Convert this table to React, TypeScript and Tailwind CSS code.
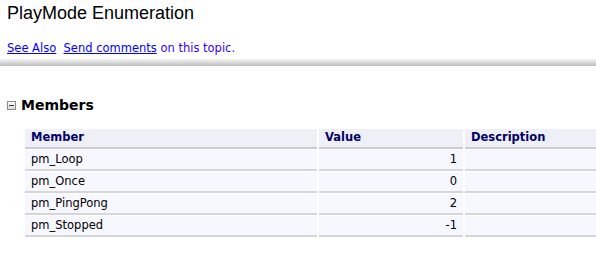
import React from "react";

type Row = { name: string; value: string; desc: string };

const rows: Row[] = [
  { name: "pm_Loop", value: "1", desc: "" },
  { name: "pm_Once", value: "0", desc: "" },
  { name: "pm_PingPong", value: "2", desc: "" },
  { name: "pm_Stopped", value: "-1", desc: "" },
];

function CollapseIcon() {
  return (
    <svg width="9" height="9" viewBox="0 0 9 9" className="shrink-0">
      <defs>
        <linearGradient id="cg" x1="0" y1="0" x2="0" y2="1">
          <stop offset="0" stopColor="#ffffff" />
          <stop offset="1" stopColor="#d8d8d8" />
        </linearGradient>
      </defs>
      <rect x="0.5" y="0.5" width="8" height="8" fill="url(#cg)" stroke="#8a8a8a" />
      <rect x="2" y="4" width="5" height="1" fill="#333333" />
    </svg>
  );
}

export default function App() {
  return (
    <div
      className="w-[596px] h-[269px] bg-white overflow-hidden"
      style={{ fontFamily: "'DejaVu Sans', Verdana, sans-serif" }}
    >
      {/* page header */}
      <div className="px-[7px] pt-[2px]">
        <div className="text-[18px] leading-[22px] text-black font-['Liberation_Sans',Arial,sans-serif]">
          PlayMode Enumeration
        </div>
        <div className="mt-[16px] text-[11.5px] leading-[16px] text-[#0000ff]">
          <a href="#" className="underline text-[#0000ff]">See Also</a>
          <span>&nbsp; </span>
          <a href="#" className="underline text-[#0000ff]">Send comments</a>
          <span className="text-[#3300ff]"> on this topic.</span>
        </div>
      </div>
      <div className="mt-[3px] h-[7px] bg-gradient-to-b from-[#f4f4f4] to-[#bdbdbd]" />

      {/* members section */}
      <div className="mt-[31px] flex items-center gap-[5px] pl-[7px]">
        <CollapseIcon />
        <div className="text-[14px] leading-[16px] font-bold text-black">Members</div>
      </div>

      <div className="mt-[16px] ml-[25px]">
        <div className="grid grid-cols-[292px_144px_1fr] gap-x-[2px] text-[11.5px]">
          <div className="bg-[#efeff7] border-b-2 border-[#cbcbdd] h-[20px] pl-[6px] flex items-center font-bold text-[#000066]">
            Member
          </div>
          <div className="bg-[#efeff7] border-b-2 border-[#cbcbdd] h-[20px] pl-[6px] flex items-center font-bold text-[#000066]">
            Value
          </div>
          <div className="bg-[#efeff7] border-b-2 border-[#cbcbdd] h-[20px] pl-[6px] flex items-center font-bold text-[#000066]">
            Description
          </div>
          {rows.map((r) => (
            <React.Fragment key={r.name}>
              <div className="mt-[1px] bg-[#f7f7ff] border-b-2 border-[#d6d6d6] h-[21px] pl-[6px] flex items-center text-black">
                {r.name}
              </div>
              <div className="mt-[1px] bg-[#f7f7ff] border-b-2 border-[#d6d6d6] h-[21px] pr-[6px] flex items-center justify-end text-black">
                {r.value}
              </div>
              <div className="mt-[1px] bg-[#f7f7ff] border-b-2 border-[#d6d6d6] h-[21px] pl-[6px] flex items-center text-black">
                {r.desc}
              </div>
            </React.Fragment>
          ))}
        </div>
      </div>
    </div>
  );
}
